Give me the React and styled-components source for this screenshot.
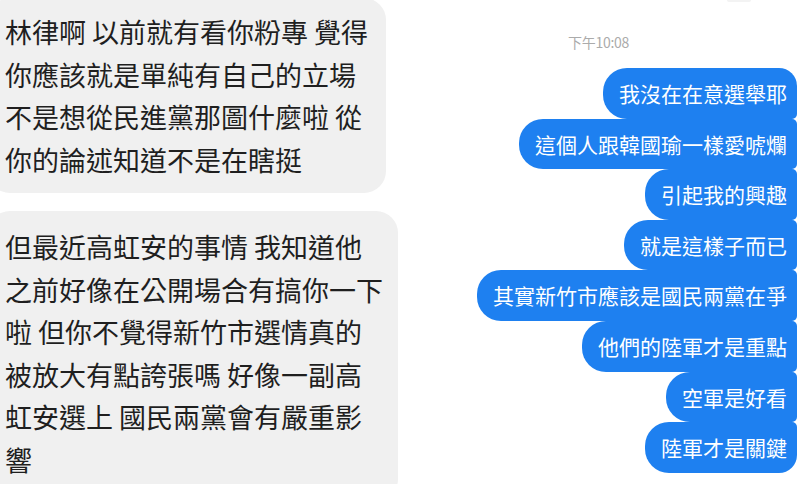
import React from 'react'
import styled, { createGlobalStyle } from 'styled-components'

const GlobalStyle = createGlobalStyle`
	html, body {
		margin: 0;
		padding: 0;
		background: #ffffff;
	}
	body {
		font-family: "Noto Sans CJK TC", "Noto Sans", sans-serif;
		overflow: hidden;
	}
`

const Page = styled.div`
	display: grid;
	grid-template-columns: 400px 400px;
	width: 800px;
	height: 484px;
	overflow: hidden;
`

const LeftColumn = styled.div`
	display: flex;
	flex-direction: column;
	align-items: flex-start;
	gap: 18px;
	margin-left: -12px;
`

const GrayBubble = styled.div`
	background: #f0f0f0;
	border-radius: 22px;
	padding: ${p => p.$first ? '13px 18px 12px 17px' : '15px 15px 20px 17px'};
	margin-top: ${p => p.$first ? '-2px' : '0'};
	color: #1f1f1f;
	font-size: 27px;
	line-height: 42.5px;
	white-space: nowrap;
`

const Line = styled.span`
	display: block;
`

const RightColumn = styled.div`
	display: flex;
	flex-direction: column;
	align-items: flex-end;
	padding-right: 3px;
`

const TopSliver = styled.div`
	width: 24px;
	height: 2px;
	margin-right: 46px;
	background: #f3f3f3;
	border-radius: 0 0 8px 8px;
`

const Timestamp = styled.div`
	align-self: center;
	margin: 30px 0 16px;
	font-size: 14px;
	line-height: 20px;
	color: #ababab;
	letter-spacing: -0.3px;
`

const BlueBubble = styled.div`
	background: #1e80f0;
	color: #ffffff;
	font-size: 21px;
	line-height: 50.6px;
	padding: 0 10px 0 16px;
	border-radius: ${p => p.$first ? '24px 18px 5px 24px' : p.$last ? '24px 5px 18px 24px' : '24px 5px 5px 24px'};
	white-space: nowrap;
`

const leftMessages = [
	['林律啊 以前就有看你粉專 覺得', '你應該就是單純有自己的立場', '不是想從民進黨那圖什麼啦 從', '你的論述知道不是在瞎挺'],
	['但最近高虹安的事情 我知道他', '之前好像在公開場合有搞你一下', '啦 但你不覺得新竹市選情真的', '被放大有點誇張嗎 好像一副高', '虹安選上 國民兩黨會有嚴重影', '響'],
]

const rightMessages = [
	'我沒在在意選舉耶',
	'這個人跟韓國瑜一樣愛唬爛',
	'引起我的興趣',
	'就是這樣子而已',
	'其實新竹市應該是國民兩黨在爭',
	'他們的陸軍才是重點',
	'空軍是好看',
	'陸軍才是關鍵',
]

const App = () => (
	<>
		<GlobalStyle />
		<Page>
			<LeftColumn>
				{leftMessages.map((lines, i) => (
					<GrayBubble key={i} $first={i === 0}>
						{lines.map(l => <Line key={l}>{l}</Line>)}
					</GrayBubble>
				))}
			</LeftColumn>
			<RightColumn>
				<TopSliver />
				<Timestamp>下午10:08</Timestamp>
				{rightMessages.map((m, i) => (
					<BlueBubble key={m} $first={i === 0} $last={i === rightMessages.length - 1}>{m}</BlueBubble>
				))}
			</RightColumn>
		</Page>
	</>
)

export default App
